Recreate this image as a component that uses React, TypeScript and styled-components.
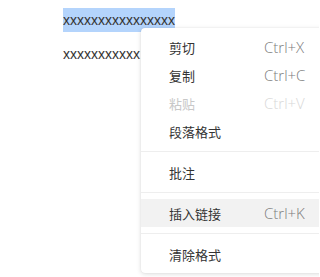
import React from "react";
import styled, { createGlobalStyle } from "styled-components";

const Global = createGlobalStyle`
  html, body {
    margin: 0;
    padding: 0;
    width: 319px;
    height: 277px;
    overflow: hidden;
    background: #ffffff;
  }
  #root {
    position: relative;
    width: 319px;
    height: 277px;
  }
`;

const Doc = styled.div`
  padding: 8px 0 0 63px;
  font-family: "Liberation Sans", Arial, sans-serif;
  font-size: 14px;
  color: #333333;
`;

const Line = styled.div`
  height: 24px;
  line-height: 24px;
  margin-bottom: 10px;
  white-space: nowrap;
`;

const Selected = styled.span`
  display: inline-block;
  height: 24px;
  background: #b4d4fc;
`;

const Menu = styled.div`
  position: absolute;
  left: 141px;
  top: 28px;
  width: 210px;
  padding: 5px 0;
  background: #ffffff;
  border-radius: 4px;
  box-shadow: 0 1px 5px rgba(0, 0, 0, 0.14), 0 0 1px rgba(0, 0, 0, 0.12);
`;

const Item = styled.div<{ $hover?: boolean }>`
  display: grid;
  grid-template-columns: 95px auto;
  align-items: center;
  height: 28px;
  padding-left: 28px;
  background: ${(p) => (p.$hover ? "#f2f2f2" : "transparent")};
`;

const Label = styled.span<{ $disabled?: boolean }>`
  font-family: "Noto Sans CJK SC", "Noto Sans", sans-serif;
  font-size: 13px;
  color: ${(p) => (p.$disabled ? "#c8c8c8" : "#333333")};
`;

const Shortcut = styled.span<{ $disabled?: boolean }>`
  font-family: "Open Sans", "Liberation Sans", sans-serif;
  font-weight: 300;
  font-size: 15px;
  color: ${(p) => (p.$disabled ? "#d8d8d8" : "#7c7c7c")};
`;

const Divider = styled.div`
  height: 1px;
  margin: 6px 0;
  background: #eeeeee;
`;

type Entry =
  | { kind: "item"; label: string; shortcut?: string; disabled?: boolean; hover?: boolean }
  | { kind: "divider" };

const entries: Entry[] = [
  { kind: "item", label: "剪切", shortcut: "Ctrl+X" },
  { kind: "item", label: "复制", shortcut: "Ctrl+C" },
  { kind: "item", label: "粘贴", shortcut: "Ctrl+V", disabled: true },
  { kind: "item", label: "段落格式" },
  { kind: "divider" },
  { kind: "item", label: "批注" },
  { kind: "divider" },
  { kind: "item", label: "插入链接", shortcut: "Ctrl+K", hover: true },
  { kind: "divider" },
  { kind: "item", label: "清除格式" },
];

export default function App() {
  return (
    <>
      <Global />
      <Doc>
        <Line>
          <Selected>xxxxxxxxxxxxxxxx</Selected>
        </Line>
        <Line>xxxxxxxxxxx</Line>
      </Doc>
      <Menu>
        {entries.map((e, i) =>
          e.kind === "divider" ? (
            <Divider key={i} />
          ) : (
            <Item key={i} $hover={e.hover}>
              <Label $disabled={e.disabled}>{e.label}</Label>
              {e.shortcut ? <Shortcut $disabled={e.disabled}>{e.shortcut}</Shortcut> : <span />}
            </Item>
          )
        )}
      </Menu>
    </>
  );
}
